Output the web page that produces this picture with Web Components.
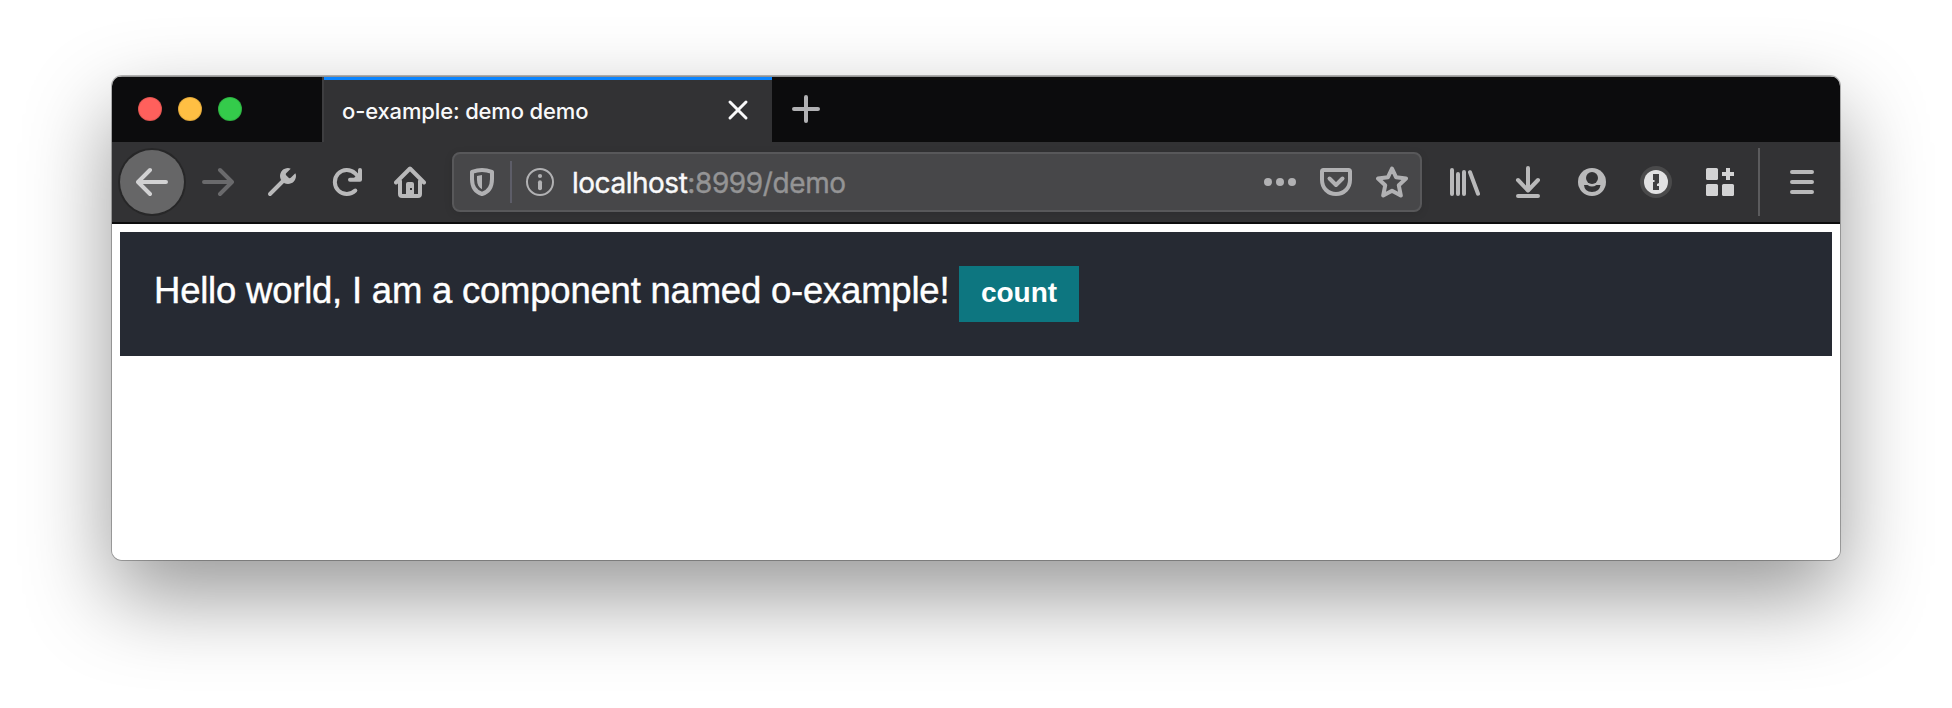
<!DOCTYPE html>
<html lang="en">
<head>
<meta charset="utf-8">
<title>o-example: demo demo</title>
<style>
  body { margin: 0; padding: 76px 112px 148px; background: #fff; height: 708px; box-sizing: border-box; overflow: hidden; }
</style>
</head>
<body>
<browser-window>
  <tab-strip slot="tabs"><browser-tab>o-example: demo demo</browser-tab></tab-strip>
  <nav-toolbar slot="toolbar"><url-bar><span slot="host">localhost</span><span slot="path">:8999/demo</span></url-bar></nav-toolbar>
  <o-example>Hello world, I am a component named o-example!</o-example>
</browser-window>
<script>
const define = (name, html) => {
  const t = document.createElement('template');
  t.innerHTML = html;
  customElements.define(name, class extends HTMLElement {
    constructor() {
      super();
      this.attachShadow({ mode: 'open' }).append(t.content.cloneNode(true));
    }
  });
};

const S = 'fill="none" stroke="currentColor" stroke-linecap="round" stroke-linejoin="round"';
const ICONS = {
  back: `<path ${S} stroke-width="4" d="M30 16H3M14 4 2 16l12 12"/>`,
  forward: `<path ${S} stroke-width="4" d="M2 16h27M18 4l12 12-12 12"/>`,
  wrench: `<path ${S} stroke-width="4" d="M4 28 18 14"/><path fill="currentColor" d="M29.300 7.300 25 11.600c-.8.8-1.900.8-2.600 0l-2-2c-.8-.8-.8-1.900 0-2.600L24.700 2.700C23.700 2.200 22.800 2 22 2c-4.400 0-8 3.600-8 8 0 1.300.3 2.500.8 3.500l3.700 3.700c1 .5 2.200.8 3.500.8 4.400 0 8-3.600 8-8 0-1-.2-1.900-.7-2.700z"/>`,
  reload: `<path ${S} stroke-width="4" d="M25.300 24.500A12 12 0 1 1 25 7.200L29 11.500M30 4v9.800h-10"/><path fill="currentColor" d="M22 14h9V5z"/>`,
  home: `<path ${S} stroke-width="4" d="M2 16.500 16 2.500l14 14M6 15v13q0 2 2 2h16q2 0 2-2V15"/><path fill="currentColor" d="M12 30V18q0-2 2-2h4q2 0 2 2v12z"/><path fill="#323234" d="M16 22h2v2h-2z"/>`,
  shield: `<path ${S} stroke-width="4" d="M16 4c-3.500 0-7 .8-10 1.800V13c0 8 3.500 13 10 15 6.500-2 10-7 10-15V5.800C23 4.800 19.500 4 16 4z"/><path fill="currentColor" d="M16 9c-1.800.2-3.500.6-5 1v4c0 4.500 1.800 7.500 5 9.200z"/>`,
  info: `<circle cx="16" cy="16" r="13" ${S} stroke-width="2"/><circle cx="16" cy="10" r="2.100" fill="currentColor"/><path ${S} stroke-width="4" d="M16 16.200v6"/>`,
  dots: `<g fill="currentColor"><circle cx="4" cy="16" r="4"/><circle cx="16" cy="16" r="4"/><circle cx="28" cy="16" r="4"/></g>`,
  pocket: `<path ${S} stroke-width="4" d="M3.500 4h25Q30 4 30 5.500V14c0 8-6 14-14 14S2 22 2 14V5.500Q2 4 3.500 4zM9.500 12.500l6.500 6.500 6.500-6.500"/>`,
  star: `<path ${S} stroke-width="4" d="M16 2.500l4 8.700 10 1.300-7.200 6.800 2 10.200L16 24.700 7.200 29.500l2-10.200L2 12.500l10-1.300z"/>`,
  library: `<path ${S} stroke-width="4" d="M4 4v24M10 8v20M16 6v22M22 6.200l8 21.500"/>`,
  download: `<path ${S} stroke-width="4" d="M16 2v22M6 14l10 10.500L26 14M6 30h20"/>`,
  account: `<circle cx="16" cy="16" r="14" fill="currentColor"/><circle cx="16" cy="12" r="6" fill="#323234"/><path fill="#323234" d="M8 19h3.500q4.500 3 9 0H24.500q-1 7-8.500 7t-8-7z"/>`,
  onepass: `<circle cx="16" cy="16" r="16" fill="#4a4a4b"/><circle cx="16" cy="16" r="12" fill="#e2e2e3"/><path fill="#404042" d="M13 8h6v9l-2 1v2h2v4h-6v-8h1.500v-2H13z"/>`,
  addons: `<g fill="#d3d3d4"><rect x="2" y="2" width="12" height="12" rx="1.500"/><rect x="2" y="18" width="12" height="12" rx="1.500"/><rect x="18" y="18" width="12" height="12" rx="1.500"/><path d="M22 2h4v4h4v4h-4v4h-4v-4h-4V6h4z"/></g>`,
  menu: `<path ${S} stroke-width="4" d="M6 6h20M6 16h20M6 26h20"/>`,
  plus: `<path ${S} stroke-width="4" d="M16 4v24M4 16h24"/>`,
  close: `<path ${S} stroke-width="3" d="M8 8l16 16M24 8 8 24"/>`
};
customElements.define('ui-icon', class extends HTMLElement {
  constructor() { super(); this.attachShadow({ mode: 'open' }); }
  connectedCallback() {
    this.shadowRoot.innerHTML = `<style>:host{display:block;width:32px;height:32px;flex:none}svg{display:block}</style>
      <svg width="32" height="32" viewBox="0 0 32 32">${ICONS[this.getAttribute('name')]}</svg>`;
  }
});

define('browser-window', `<style>
  :host { display: block; height: 484px; border-radius: 10px; background: linear-gradient(#929292 1px, #fff 1px);
    box-shadow: 0 0 0 1px rgba(0,0,0,.27), 0 36px 86px rgba(0,0,0,.41); }
  .clip { height: 484px; border-radius: 10px; overflow: hidden; padding-top: 1px; box-sizing: border-box; }
  main { padding: 8px; }
</style><div class="clip"><slot name="tabs"></slot><slot name="toolbar"></slot><main><slot></slot></main></div>`);

define('tab-strip', `<style>
  :host { display: flex; height: 65px; background: #0c0c0d; align-items: stretch; }
  .lights { display: flex; gap: 16px; width: 210px; box-sizing: border-box; padding: 20px 0 0 26px; }
  i { width: 24px; height: 24px; border-radius: 50%; box-sizing: border-box; border: 1px solid rgba(0,0,0,.12); }
  ui-icon { color: #b1b1b3; margin: 16px 0 0 18px; }
</style>
<div class="lights"><i style="background:#ff605c"></i><i style="background:#ffbf43"></i><i style="background:#34cb4b"></i></div>
<slot></slot><ui-icon name="plus"></ui-icon>`);

define('browser-tab', `<style>
  :host { display: flex; width: 450px; box-sizing: border-box; justify-content: space-between; background: #323234;
    border-left: 2px solid #3e3e40; box-shadow: inset 0 3px #0a84ff; padding: 0 18px; color: #f9f9fa;
    font: 500 22px/28px Inter, "Liberation Sans", sans-serif; }
  span { padding-top: 20px; letter-spacing: -.15px; white-space: nowrap; }
  ui-icon { margin-top: 17px; }
</style><span><slot></slot></span><ui-icon name="close"></ui-icon>`);

define('nav-toolbar', `<style>
  :host { display: flex; height: 82px; box-sizing: border-box; align-items: center; background: #323234;
    border-bottom: 2px solid #0c0c0d; padding: 0 6px; color: #b9b9ba; }
  .b { width: 64px; height: 64px; display: grid; place-items: center; flex: none; }
  .back { width: 64px; border-radius: 50%; background: #666667; box-shadow: 0 0 0 2px #272728; margin: 0 2px; color: #d2d2d3; }
  .off { color: #6a6a6c; }
  ::slotted(url-bar) { margin: 0 10px; flex: 1; }
  hr { width: 2px; height: 68px; border: 0; margin: 0 10px 0 6px; background: #5b5b5d; }
</style>
<div class="b back"><ui-icon name="back"></ui-icon></div>
<div class="b off"><ui-icon name="forward"></ui-icon></div>
<div class="b"><ui-icon name="wrench"></ui-icon></div>
<div class="b"><ui-icon name="reload"></ui-icon></div>
<div class="b"><ui-icon name="home"></ui-icon></div>
<slot></slot>
<div class="b"><ui-icon name="library"></ui-icon></div>
<div class="b"><ui-icon name="download"></ui-icon></div>
<div class="b"><ui-icon name="account"></ui-icon></div>
<div class="b"><ui-icon name="onepass"></ui-icon></div>
<div class="b"><ui-icon name="addons"></ui-icon></div>
<hr>
<div class="b"><ui-icon name="menu"></ui-icon></div>`);

define('url-bar', `<style>
  :host { display: flex; height: 60px; box-sizing: border-box; align-items: center; background: #474749;
    border: 2px solid #58585a; border-radius: 8px; padding: 0 12px; color: #b1b1b3; box-shadow: 0 2px 8px rgba(0,0,0,.1); }
  hr { width: 2px; height: 42px; border: 0; margin: 0 12px; background: #5d5d68; }
  p { margin: 0 auto 0 16px; padding-top: 2px; font: 28px/34px Inter, "Liberation Sans", sans-serif; white-space: nowrap; -webkit-text-stroke: .4px; }
  .h { color: #f9f9fa; letter-spacing: -.48px; } .p { color: #949495; letter-spacing: -.4px; }
  .acts { display: flex; gap: 24px; }
</style>
<ui-icon name="shield"></ui-icon><hr><ui-icon name="info"></ui-icon>
<p><span class="h"><slot name="host"></slot></span><span class="p"><slot name="path"></slot></span></p>
<div class="acts"><ui-icon name="dots"></ui-icon><ui-icon name="pocket"></ui-icon><ui-icon name="star"></ui-icon></div>`);

define('o-example', `<style>
  :host { display: flex; height: 124px; box-sizing: border-box; padding: 34px; align-items: flex-start; background: #262a33; color: #fff;
    font: 36.5px/44px "Liberation Sans", Arial, sans-serif; }
  span { width: 805px; white-space: nowrap; padding-top: 3px; letter-spacing: -.22px; -webkit-text-stroke: .4px; }
  button { width: 120px; height: 56px; margin: 0; padding: 0; border: 0; border-radius: 0; background: #0d7680; color: #fff;
    font: bold 28px/50px "Liberation Sans", Arial, sans-serif; flex: none; padding-bottom: 2px; }
</style><span><slot></slot></span><button type="button">count</button>`);
</script>
</body>
</html>
